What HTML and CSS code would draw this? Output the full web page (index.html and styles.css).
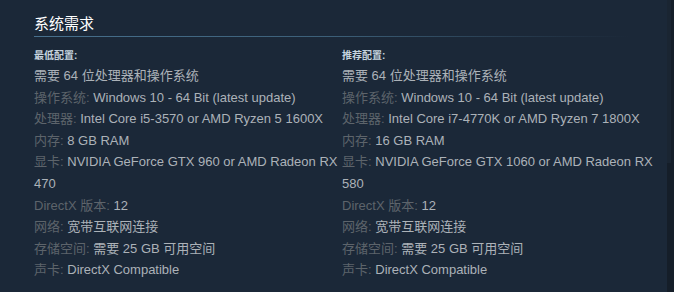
FILE: index.html
```html
<!DOCTYPE html>
<html lang="zh">
<head>
<meta charset="utf-8">
<link rel="stylesheet" href="styles.css">
</head>
<body>
<div class="page">
  <h2 class="title">系统需求</h2>
  <div class="cols">
    <div class="col">
      <div class="col-head">最低配置:</div>
      <ul class="reqs">
        <li>需要 64 位处理器和操作系统</li>
        <li><span class="lbl">操作系统:</span> Windows 10 - 64 Bit (latest update)</li>
        <li><span class="lbl">处理器:</span> Intel Core i5-3570 or AMD Ryzen 5 1600X</li>
        <li><span class="lbl">内存:</span> 8 GB RAM</li>
        <li><span class="lbl">显卡:</span> NVIDIA GeForce GTX 960 or AMD Radeon RX 470</li>
        <li><span class="lbl">DirectX 版本:</span> 12</li>
        <li><span class="lbl">网络:</span> 宽带互联网连接</li>
        <li><span class="lbl">存储空间:</span> 需要 25 GB 可用空间</li>
        <li><span class="lbl">声卡:</span> DirectX Compatible</li>
      </ul>
    </div>
    <div class="col">
      <div class="col-head">推荐配置:</div>
      <ul class="reqs">
        <li>需要 64 位处理器和操作系统</li>
        <li><span class="lbl">操作系统:</span> Windows 10 - 64 Bit (latest update)</li>
        <li><span class="lbl">处理器:</span> Intel Core i7-4770K or AMD Ryzen 7 1800X</li>
        <li><span class="lbl">内存:</span> 16 GB RAM</li>
        <li><span class="lbl">显卡:</span> NVIDIA GeForce GTX 1060 or AMD Radeon RX 580</li>
        <li><span class="lbl">DirectX 版本:</span> 12</li>
        <li><span class="lbl">网络:</span> 宽带互联网连接</li>
        <li><span class="lbl">存储空间:</span> 需要 25 GB 可用空间</li>
        <li><span class="lbl">声卡:</span> DirectX Compatible</li>
      </ul>
    </div>
  </div>
</div>
<div class="scrollbar"><div class="thumb"></div></div>
</body>
</html>
```

FILE: styles.css
```css
html, body {
  margin: 0;
  padding: 0;
  background: #1b2838;
  height: 100%;
  overflow: hidden;
}
body {
  font-family: "Liberation Sans", "Noto Sans CJK SC", sans-serif;
  color: #acb2b8;
}
.page {
  padding: 13px 0 0 34px;
}
.title {
  margin: 0;
  width: 596px;
  font-size: 15px;
  font-weight: normal;
  color: #ffffff;
  line-height: 22px;
  padding-bottom: 1px;
  border-bottom: 1px solid transparent;
  border-image: linear-gradient(to right, #47708d 0%, #3c5f78 50%, rgba(40,60,80,0.4) 90%, rgba(27,40,56,0) 100%) 1;
}
.cols {
  display: grid;
  grid-template-columns: 308px 316px;
  margin-top: 12px;
}
.col-head {
  font-size: 10px;
  font-weight: bold;
  color: #c6d4df;
  line-height: 14px;
  margin-bottom: 2px;
}
.reqs {
  list-style: none;
  margin: 0;
  padding: 0;
  font-size: 13px;
  line-height: 21.6px;
}
.lbl {
  color: #5d646b;
}
.scrollbar {
  position: absolute;
  top: 0;
  right: 0;
  width: 7px;
  height: 100%;
  background: #151e29;
}
.thumb {
  width: 4px;
  height: 163px;
  background: #1a2532;
}
```
